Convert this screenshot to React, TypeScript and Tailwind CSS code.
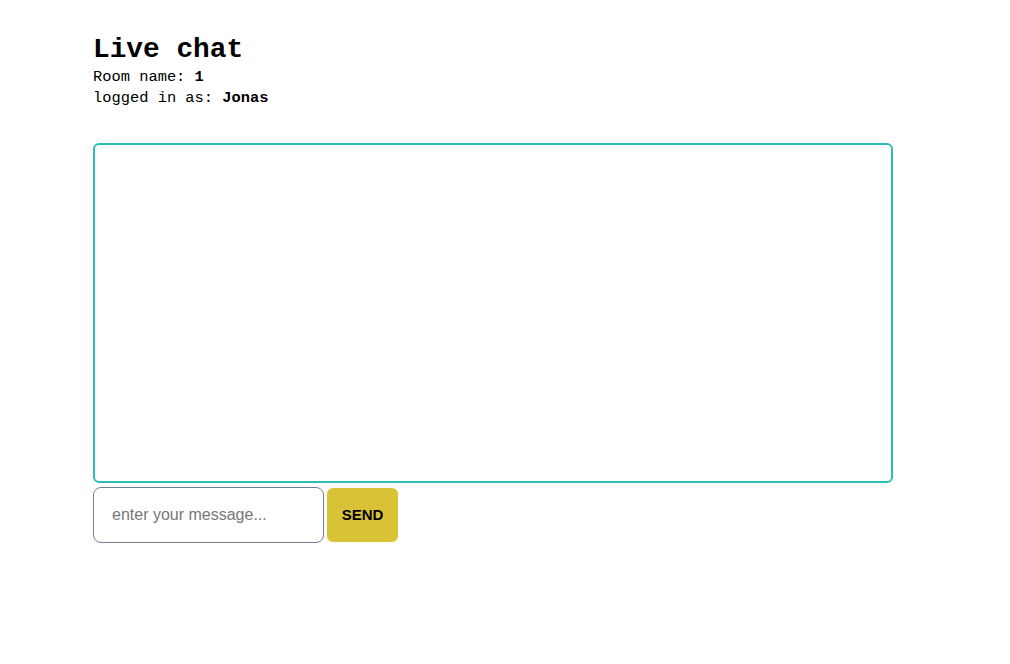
import { useState } from "react";

function App() {
  const [message, setMessage] = useState("");

  return (
    <div className="min-h-screen bg-white pl-[93px] pt-[32px] font-['Liberation_Mono',monospace] text-black">
      <h1 className="text-[27.8px] font-bold leading-[35px]">Live chat</h1>
      <p className="text-[15.4px] leading-[21px]">
        Room name: <b>1</b>
      </p>
      <p className="text-[15.4px] leading-[21px]">
        logged in as: <b>Jonas</b>
      </p>

      <div className="mt-[34px] h-[340px] w-[800px] rounded-[6px] border-2 border-[#2ebdb6]"></div>

      <div className="mt-[4px] flex items-center gap-[3px] font-['Liberation_Sans',Arial,sans-serif]">
        <input
          value={message}
          onChange={(e) => setMessage(e.target.value)}
          placeholder="enter your message..."
          className="h-[56px] w-[231px] rounded-[8px] border border-[#71808f] px-[18px] text-[16px] outline-none placeholder:text-[#777]"
        />
        <button className="h-[54px] w-[71px] rounded-[6px] bg-[#dac236] text-[15px] font-bold text-black">
          SEND
        </button>
      </div>
    </div>
  );
}

export default App;
